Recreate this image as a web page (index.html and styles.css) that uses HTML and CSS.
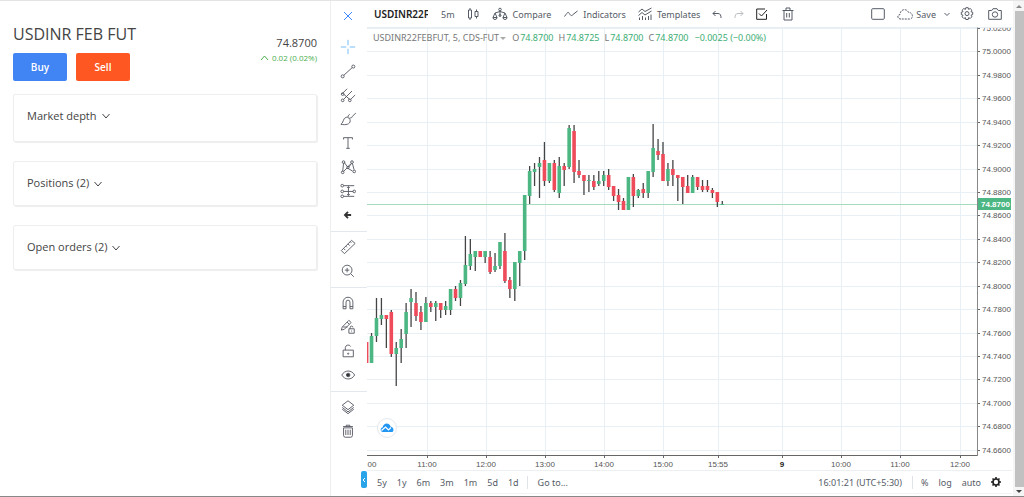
FILE: index.html
```html
<!DOCTYPE html>
<html lang="en">
<head>
<meta charset="utf-8">
<title>USDINR FEB FUT</title>
<link rel="stylesheet" href="styles.css">
</head>
<body>
<div class="app">
  <aside class="panel">
    <header class="quote">
      <div>
        <h1 class="title">USDINR FEB FUT</h1>
        <div class="actions">
          <button class="btn buy">Buy</button>
          <button class="btn sell">Sell</button>
        </div>
      </div>
      <div class="price">
        <div class="last">74.8700</div>
        <div class="change"><svg width="9" height="6" viewBox="0 0 9 6"><path d="M1 5l3.500-4L8 5"/></svg>0.02 (0.02%)</div>
      </div>
    </header>
    <button class="card tall">Market depth <svg width="8" height="6" viewBox="0 0 8 6"><path d="M.5 1L4 5l3.500-4"/></svg></button>
    <button class="card">Positions (2) <svg width="8" height="6" viewBox="0 0 8 6"><path d="M.5 1L4 5l3.500-4"/></svg></button>
    <button class="card">Open orders (2) <svg width="8" height="6" viewBox="0 0 8 6"><path d="M.5 1L4 5l3.500-4"/></svg></button>
  </aside>

  <nav class="tools" aria-label="Drawing tools">
    <button class="tool close" aria-label="Close"><svg viewBox="0 0 18 18"><path d="M4.500 4.500l9 9M13.500 4.500l-9 9"/></svg></button>
    <button class="tool cross" aria-label="Crosshair"><svg viewBox="0 0 18 18"><path d="M1 9h6M11 9h6M9 1v6M9 11v6"/></svg></button>
    <button class="tool" aria-label="Trend line"><svg viewBox="0 0 18 18"><circle cx="3" cy="15" r="1.700"/><circle cx="15" cy="4" r="1.700"/><path d="M4.300 13.800L13.700 5.200"/></svg></button>
    <button class="tool" aria-label="Pitchfork"><svg viewBox="0 0 18 18"><path d="M2 8l6-6M4 14L13.500 4.500M12 14l5-5M4 8l7 6"/><circle cx="3" cy="8" r="1.500"/><circle cx="3" cy="15" r="1.500"/><circle cx="11" cy="15" r="1.500"/></svg></button>
    <button class="tool" aria-label="Brush"><svg viewBox="0 0 18 18"><path d="M1 15c3-1 2-7 6-8 2-.5 4.500 1.500 4.500 4 0 4-5 5-10.500 4zM9 7c0-2 1-3 2-3M11 7.500c1.500 1 3-.5 3-1.500l4-4"/></svg></button>
    <button class="tool" aria-label="Text"><svg viewBox="0 0 18 18"><path d="M4 5V3h10v2M9 3v12M7 15h4"/></svg></button>
    <button class="tool" aria-label="Patterns"><svg viewBox="0 0 18 18"><path d="M4.500 3.500L8.500 9l4-4M4 5L3 14M4 14l4-4 6 3.500M14 5l1.800 7M9.500 9.500L13 5"/><circle cx="4" cy="3.500" r="1.500"/><circle cx="13.500" cy="3.500" r="1.500"/><circle cx="3" cy="15" r="1.500"/><circle cx="9" cy="9.500" r="1.300"/><circle cx="16" cy="14" r="1.500"/></svg></button>
    <button class="tool" aria-label="Position forecast"><svg viewBox="0 0 18 18"><path d="M4 3h12M4 9.500h11M4 15h12M9.500 4v10M8 5.500L9.500 4 11 5.500M8 12.500L9.500 14l1.500-1.500"/><circle cx="2.500" cy="3" r="1.500"/><circle cx="2.500" cy="9.500" r="1.500"/><circle cx="16" cy="9.500" r="1.500"/><circle cx="2.500" cy="15" r="1.500"/></svg></button>
    <button class="tool bold" aria-label="Back"><svg viewBox="0 0 18 18"><path d="M12.500 9H6.500M9 5.500L5.500 9 9 12.500"/></svg></button>
    <hr>
    <button class="tool" aria-label="Measure"><svg viewBox="0 0 18 18"><path d="M1.500 13L13 1.500 17 5 5 16.500zM4 10.500l2 2M6.500 8l1.300 1.300M9 5.500l2 2M11.500 3l1.300 1.300"/></svg></button>
    <button class="tool" aria-label="Zoom in"><svg viewBox="0 0 18 18"><circle cx="8" cy="8" r="5.500"/><path d="M12 12l3.500 3.500M5.500 8h5M8 5.500v5"/></svg></button>
    <hr>
    <button class="tool" aria-label="Magnet"><svg viewBox="0 0 18 18"><path d="M3.500 15.500V8a5.500 5.500 0 0 1 11 0v7.500h-3.300V8a2.200 2.200 0 0 0-4.400 0v7.500zM3.500 13h3.300M11.200 13h3.300"/></svg></button>
    <button class="tool" aria-label="Stay in drawing mode"><svg viewBox="0 0 18 18"><path d="M1.500 12.500L2.500 9 10 1.500 12.500 4 5 11.500zM3.500 9L8.500 9M8 3.500L10.500 6M10 11h6v5h-6zM11.500 11V9.500a1.500 1.500 0 0 1 3 0M13 13v1"/></svg></button>
    <button class="tool" aria-label="Lock drawings"><svg viewBox="0 0 18 18"><path d="M3.500 8h11.500v7.500H3.500zM6 8V5a3.200 3.200 0 0 1 6-1"/><circle cx="9.200" cy="12" r=".7"/></svg></button>
    <button class="tool" aria-label="Hide drawings"><svg viewBox="0 0 18 18"><path d="M2 9c3.500-6 11-6 14.500 0-3.500 6-11 6-14.500 0z"/><circle class="solid" cx="9.200" cy="9" r="2"/></svg></button>
    <hr>
    <button class="tool" aria-label="Object tree"><svg viewBox="0 0 18 18"><path d="M9 2l6.500 5L9 12 2.500 7zM2.500 9.500L9 14.500l6.500-5M2.500 11.500L9 16.500l6.500-5"/></svg></button>
    <button class="tool" aria-label="Remove drawings"><svg viewBox="0 0 18 18"><path d="M4 5.500h10V14a2 2 0 0 1-2 2H6a2 2 0 0 1-2-2zM3.500 4h11M7 4V2.500h4V4M6.500 7.500v6M9 7.500v6M11.500 7.500v6"/></svg></button>
  </nav>

  <main class="chart">
    <div class="bar top">
      <button class="symbol">USDINR22FE</button>
      <button>5m</button>
      <button aria-label="Candles"><svg width="12" height="14" viewBox="0 0 12 14"><path d="M1.500 3h3v8h-3zM3 1v2M3 11v2M8 4.500h3v5H8zM9.500 2.500v2M9.500 9.500v2"/></svg></button>
      <button class="labelled compare"><svg width="16" height="14" viewBox="0 0 16 14"><path d="M8 4v5M8 4.500L3 6M8 4.500L13 6M3 6l-2 4.500M3 6l2 4.500M13 6l-2 4.500M13 6l2 4.500M1 10.500h4a2 2 0 0 1-4 0zM11 10.500h4a2 2 0 0 1-4 0z"/><circle cx="8" cy="2.500" r="1.300"/><circle cx="8" cy="8.500" r="1"/></svg>Compare</button>
      <button class="labelled indicators"><svg width="14" height="14" viewBox="0 0 14 14"><path d="M.5 9.500C3 6 4 4.500 5 6s2 4 4 1.500L13.500 4"/></svg>Indicators</button>
      <button class="labelled templates"><svg width="14" height="14" viewBox="0 0 14 14"><path d="M.5 5L4 2l3 2.500L13.500 1M.5 8.500L4 5.500 7 8l6.500-4M1.500 10.500V13M4.500 9V13M7.500 10.500V13M10.500 9V13M13 7.500V13"/></svg>Templates</button>
      <button aria-label="Undo"><svg width="10" height="9" viewBox="0 0 10 9"><path d="M3.500 1L1 3.500 3.500 6M1 3.500h5c2.500 0 3 2 3 4.500"/></svg></button>
      <button class="faded" aria-label="Redo"><svg width="10" height="9" viewBox="0 0 10 9"><path d="M6.500 1L9 3.500 6.500 6M9 3.500H4C1.500 3.500 1 5.500 1 8"/></svg></button>
      <button class="dark" aria-label="Select"><svg width="12" height="12" viewBox="0 0 12 12"><path d="M10.500 6v5.300H.7V1h8.300M3 5.500L5.500 8 11 2"/></svg></button>
      <button class="trash" aria-label="Delete"><svg width="12" height="14" viewBox="0 0 12 14"><path d="M2 3.500h8V13H2zM.5 3.500h11M4 3.500V1h4v2.500M4.700 6v4.500M7.300 6v4.500"/></svg></button>
      <span class="spring"></span>
      <button aria-label="Layout"><svg width="14" height="12" viewBox="0 0 14 12"><rect x=".7" y=".7" width="12.600" height="10.600" rx="1"/></svg></button>
      <button class="labelled save"><svg width="16" height="12" viewBox="0 0 16 12"><path stroke-dasharray="2 1" d="M4 11C0 11 0 7 3 6.500 3 1 10 0 11.500 4.500 16 4 17 11 12.500 11z"/></svg>Save</button>
      <button class="more" aria-label="Save menu"><svg width="6" height="5" viewBox="0 0 6 5"><path d="M.5 1L3 3.500 5.500 1"/></svg></button>
      <button class="settings" aria-label="Settings"><svg width="14" height="14" viewBox="0 0 14 14"><path d="M5.800.7h2.400l.4 1.700 1.600-.9 1.700 1.700-.9 1.600 1.700.4v2.400l-1.700.6.9 1.600-1.700 1.700-1.600-.9-.4 1.900H5.800l-.4-1.900-1.600.9-1.700-1.700.9-1.600-1.700-.6V5.200l1.700-.4-.9-1.600 1.700-1.700 1.600.9z"/><circle cx="7" cy="6.600" r="2"/></svg></button>
      <button aria-label="Snapshot"><svg width="14" height="12" viewBox="0 0 14 12"><path d="M.7 2.500h3L5 .7h4l1.300 1.800h3v8.800H.7z"/><circle cx="7" cy="6.500" r="2.700"/></svg></button>
    </div>

    <div class="stage">
      <svg class="plot" id="plot" aria-label="Price chart"></svg>
      <svg class="prices" id="prices"></svg>
      <svg class="times" id="times"></svg>
      <div class="legend">
        <span>USDINR22FEBFUT, 5, CDS-FUT</span><i class="caret"></i>
        <span>O<b>74.8700</b></span><span>H<b>74.8725</b></span><span>L<b>74.8700</b></span><span>C<b>74.8700</b></span><b class="delta">−0.0025 (−0.00%)</b>
      </div>
      <div class="badge"><svg width="14" height="10" viewBox="0 0 14 10"><path fill="#2196f3" d="M3 9C0 9 0 5 2.500 4.500 3.500 0 9-1 10.500 3.500 14 4 14.500 9 11.500 9z"/><path d="M1.500 7.500L5.500 4l3 3L11 4.500" fill="none" stroke="#fff" stroke-width="1.200"/></svg></div>
    </div>

    <div class="bar bottom">
      <button>5y</button><button>1y</button><button>6m</button><button>3m</button><button>1m</button><button>5d</button><button>1d</button>
      <button class="goto">Go to...</button>
      <span class="spring"></span>
      <button>16:01:21 (UTC+5:30)</button>
      <button class="percent">%</button><button>log</button><button>auto</button>
      <button class="dark" aria-label="Chart settings"><svg width="10" height="10" viewBox="0 0 10 10"><circle cx="5" cy="5" r="3" stroke-width="1.600"/><path stroke-width="1.600" d="M5 0v2M5 8v2M0 5h2M8 5h2M1.500 1.500l1.300 1.300M7.200 7.200l1.300 1.300M8.500 1.500L7.200 2.800M2.800 7.200L1.500 8.500"/></svg></button>
      <button class="handle" aria-label="Hide toolbar"><svg width="4" height="6" viewBox="0 0 4 6"><path d="M3 1L1 3l2 2"/></svg></button>
    </div>
  </main>
  <div class="scroll" aria-hidden="true">
    <svg width="6" height="3"><path d="M0 3l3-3 3 3z" fill="#888"/></svg>
    <span></span>
    <svg width="6" height="3"><path d="M0 0l3 3 3-3z" fill="#444"/></svg>
  </div>
</div>
<script src="chart.js"></script>
</body>
</html>
```
FILE: styles.css
```css
* { box-sizing: border-box; }
body { margin: 0; font-family: "Noto Sans", "Open Sans", sans-serif; color: #444; background: #fff; }
button { font: inherit; color: inherit; background: none; border: 0; padding: 0; margin: 0; white-space: nowrap; cursor: pointer; }
svg { fill: none; stroke: currentColor; flex: none; }
.app { display: flex; height: 100vh; border-top: 1px solid #e4e4e4; border-bottom: 1px solid #888; }

.panel { flex: 0 1 331px; min-width: 240px; padding: 22px 13px 0 13px; border-right: 1px solid #eee; font-family: "Open Sans", sans-serif; }
.quote { display: flex; justify-content: space-between; margin-bottom: 13px; }
.title { margin: 0 0 8px; font-size: 16px; line-height: 22px; font-weight: 400; }
.actions { display: flex; gap: 9px; }
.btn { width: 54px; height: 28px; border-radius: 2px; color: #fff; font-size: 10px; font-weight: 600; }
.buy { background: #4184f3; }
.sell { background: #ff5722; }
.price { text-align: right; padding-top: 12px; }
.last { font-size: 11px; line-height: 16px; }
.change { color: #4caf50; font-size: 8px; line-height: 14px; display: flex; align-items: center; justify-content: flex-end; gap: 3px; }
.card { display: flex; align-items: center; gap: 5px; width: 100%; height: 45px; margin-bottom: 19px; padding: 0 13px 2px; border: 1px solid #eee; border-radius: 2px; box-shadow: 1px 1px 1px #eee; font-size: 11px; text-align: left; }
.card.tall { height: 48px; padding-bottom: 6px; }
.card svg { margin-top: 2px; }

.tools { flex: none; width: 36px; display: flex; flex-direction: column; align-items: center; padding-top: 3px; color: #50535e; }
.tool { width: 24px; height: 24px; padding: 4px; margin-right: 3px; }
.tool svg { display: block; width: 16px; height: 16px; }
.tools hr { width: 100%; height: 1px; margin: 4px 0 3px; border: 0; background: #e3e8ee; }
.close { color: #2979ff; margin-bottom: 7px; }
.cross { color: #64b5f6; }
.bold { color: #333; stroke-width: 2; }
.solid { fill: #333; }

.chart { flex: 1; min-width: 0; display: flex; flex-direction: column; padding-bottom: 2px; }
.bar { display: flex; align-items: center; font-size: 9px; color: #555b66; position: relative; flex: none; }
.bar button { display: flex; align-items: center; }
.top { height: 26px; padding: 0 10px 0 7px; gap: 12px; }
.bar .symbol { display: block; width: 54px; overflow: hidden; margin-right: 1px; text-align: left; font-size: 10px; font-weight: 600; color: #222; }
.bar .labelled { gap: 5px; }
.bar .compare { margin: 0 1px; }
.bar .save { gap: 3px; }
.spring { flex: 1; }
.faded { opacity: .4; }
.bar .dark { color: #222; }
.bar .trash { margin-left: 2px; }
.bar .more { margin: 0 -2px 0 -4px; }
.bar .settings { margin-right: 2px; }

.stage { flex: 1; min-height: 0; position: relative; display: grid; grid-template: minmax(0, 1fr) 14px / minmax(0, 1fr) 35px; }
.plot { width: 100%; height: 100%; border-top: 1px solid #e6edf3; border-bottom: 1px solid #666; }
.prices { width: 35px; height: 100%; border-left: 1px solid #888; border-top: 1px solid #e6edf3; }
.times { width: 100%; height: 14px; overflow: hidden; }
.stage text { font: 8px "Liberation Sans", Arial, sans-serif; fill: #555; stroke: none; }
.stage text.day { font-weight: 700; fill: #222; }
.stage text.current { font-weight: 700; fill: #fff; }
.grid { stroke: #e8f0f5; }
.legend { position: absolute; left: 6px; top: 4px; display: flex; align-items: center; gap: 5px; font-size: 9px; line-height: 14px; color: #777; white-space: nowrap; }
.legend b { font-weight: 400; color: #3dae74; margin-left: 1px; }
.caret { border: 3px solid transparent; border-top-color: #aaa; border-bottom: 0; margin: 0 1px 0 -4px; }
.badge { position: absolute; left: 10px; bottom: 32px; width: 20px; height: 20px; border: 1px solid #e3e8ee; border-radius: 50%; background: #fff; display: flex; align-items: center; justify-content: center; }
.badge svg { stroke: none; }

.bottom { height: 24px; padding: 0 11px 0 10px; gap: 10px; border-top: 1px solid #edf0f3; border-bottom: 1px solid #f1f3f5; }
.bottom .goto { border-left: 1px solid #e0e3e8; padding-left: 10px; margin-left: -2px; }
.bottom .percent { border-left: 1px solid #e0e3e8; padding-left: 8px; }
.bottom .handle { position: absolute; left: -6px; top: 0; width: 6px; height: 17px; justify-content: center; border-radius: 2px; background: #29a4e8; color: #fff; }

.scroll { flex: none; width: 12px; display: flex; flex-direction: column; align-items: center; gap: 3px; padding: 4px 0 3px 1px; background: #f5f5f5; border-left: 1px solid #fff; }
.scroll svg { stroke: none; }
.scroll span { flex: 1; width: 9px; background: #c1c1c1; }
```
FILE: chart.js
```js
const NS = 'http://www.w3.org/2000/svg';
const GREEN = '#4db783', RED = '#ee4b5b';

function add(parent, tag, attrs, text) {
  const el = document.createElementNS(NS, tag);
  for (const key in attrs) el.setAttribute(key, attrs[key]);
  if (text) el.textContent = text;
  parent.appendChild(el);
  return el;
}

const plot = document.getElementById('plot');
const prices = document.getElementById('prices');
const times = document.getElementById('times');

// Each row: wick top, wick bottom, body top, body bottom, rising.
const candles = [
  [342,363,342,363,0],[333,363,336,363,1],[298,342,318,336,1],[298,325,315,319,1],
  [315,348,315,319,0],[310,357,312,354,0],[342,386,348,354,1],[329,363,339,348,1],
  [303,348,312,334,1],[289,327,298,302,1],[292,321,303,316,0],[306,330,312,322,0],
  [297,322,303,322,1],[301,312,303,307,0],[301,321,303,307,1],[303,318,303,310,0],
  [301,315,306,310,1],[289,315,289,310,1],[286,301,289,298,0],[280,306,283,298,1],
  [236,286,265,284,1],[239,270,254,266,1],[251,271,251,257,1],[251,257,251,257,0],
  [251,263,251,257,1],[251,274,257,272,0],[253,272,266,270,1],[242,269,242,266,1],
  [233,283,251,281,0],[277,298,280,289,0],[262,301,262,289,1],[251,286,251,263,1],
  [195,260,195,251,1],[166,204,171,196,1],[163,186,169,172,1],[157,198,163,167,1],
  [142,186,160,181,0],[163,183,163,181,1],[160,192,163,190,0],[157,198,166,193,1],
  [163,186,166,170,0],[125,169,128,167,1],[125,183,131,172,0],[160,178,171,175,0],
  [175,195,175,181,0],[175,192,180,181,1],[175,190,181,187,0],[171,186,181,184,1],
  [171,186,175,181,1],[169,190,175,187,0],[186,201,186,196,0],[189,210,195,202,0],
  [198,210,201,210,0],[177,210,177,210,1],[174,207,177,196,0],[189,198,190,196,1],
  [183,198,189,193,0],[171,198,171,193,1],[124,177,148,172,1],[139,160,151,155,0],
  [142,181,154,181,0],[163,186,169,181,1],[160,186,169,175,0],[175,201,175,178,0],
  [177,204,177,187,0],[175,193,186,193,0],[175,193,177,193,1],[177,190,177,187,0],
  [180,192,186,190,0],[180,192,186,190,0],[188,198,190,193,0],[192,207,192,202,0],
  [201,205,204,205,1]
];

const labels = [[5, '00'], [60, '11:00'], [119, '12:00'], [178, '13:00'], [237, '14:00'],
  [296, '15:00'], [351, '15:55'], [415, '9'], [474, '10:00'], [533, '11:00'], [593, '12:00']];

for (const [x, label] of labels) {
  if (x > 10) add(plot, 'line', { class: 'grid', x1: x + .5, x2: x + .5, y1: 0, y2: '100%' });
  if (x > 10) add(times, 'line', { x1: x + .5, x2: x + .5, y1: 0, y2: 2, stroke: '#666' });
  add(times, 'text', { x, y: 11, 'text-anchor': 'middle', class: label === '9' ? 'day' : '' }, label);
}

for (let i = 0; i < 19; i++) {
  const y = Math.round(i * 23.43);
  add(plot, 'line', { class: 'grid', x1: 0, x2: '100%', y1: y + .5, y2: y + .5 });
  add(prices, 'line', { x1: 0, x2: 2, y1: y + .5, y2: y + .5, stroke: '#666' });
  add(prices, 'text', { x: 4, y: y + 3 }, (75.02 - i * .02).toFixed(4));
}

add(plot, 'line', { x1: 0, x2: '100%', y1: 176.5, y2: 176.5, stroke: '#a5dcbd' });

const series = add(plot, 'g', { transform: 'translate(0 -28)' });
candles.forEach(([high, low, top, bottom, up], i) => {
  const x = i * 4.94 - .4;
  add(series, 'line', { x1: x, x2: x, y1: high, y2: low, stroke: '#444', 'stroke-width': 1.3 });
  add(series, 'rect', { x: x - 1.8, y: top, width: 3.6, height: bottom - top, fill: up ? GREEN : RED, stroke: 'none' });
});

add(prices, 'rect', { x: 0, y: 170, width: 33, height: 12, fill: GREEN, stroke: 'none' });
add(prices, 'text', { x: 3, y: 179, class: 'current' }, '74.8700');
```
